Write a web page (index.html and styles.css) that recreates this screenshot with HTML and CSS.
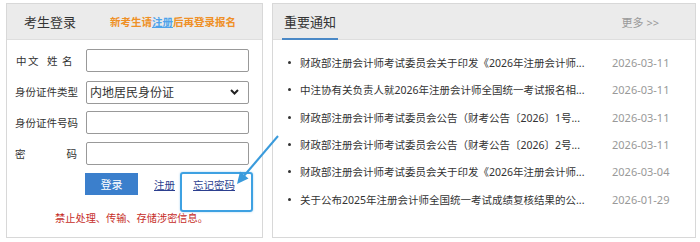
FILE: index.html
```html
<!DOCTYPE html>
<html lang="zh-CN">
<head>
    <meta charset="UTF-8">
    <meta name="viewport" content="width=device-width, initial-scale=1.0">
    <title>考生登录</title>
    <link rel="stylesheet" href="styles.css">
</head>
<body>
    <div class="page">
        <div class="panel login">
            <div class="panel-head">
                <span class="login-title">考生登录</span>
                <span class="login-tip">新考生请<a href="#">注册</a>后再登录报名</span>
            </div>
            <form class="login-form">
                <div class="row">
                    <label class="label name-label"><span>中文</span><span>姓名</span></label>
                    <input type="text" class="field">
                </div>
                <div class="row">
                    <label class="label">身份证件类型</label>
                    <span class="select-wrap">
                        <select class="field select">
                            <option>内地居民身份证</option>
                        </select>
                        <svg class="chevron" width="9" height="6" viewBox="0 0 9 6"><path d="M1 1 L4.5 4.5 L8 1" fill="none" stroke="#222" stroke-width="2"/></svg>
                    </span>
                </div>
                <div class="row">
                    <label class="label">身份证件号码</label>
                    <input type="text" class="field">
                </div>
                <div class="row">
                    <label class="label justify">密码</label>
                    <input type="password" class="field">
                </div>
                <div class="actions">
                    <button type="button" class="btn-login">登录</button>
                    <a href="#" class="link">注册</a>
                    <a href="#" class="link forgot">忘记密码</a>
                </div>
                <p class="warning">禁止处理、传输、存储涉密信息。</p>
            </form>
        </div>

        <div class="panel notice">
            <div class="panel-head">
                <span class="notice-title">重要通知</span>
                <a href="#" class="more">更多 &gt;&gt;</a>
            </div>
            <ul class="notice-list">
                <li><span class="dot"></span><a href="#" class="item-title">财政部注册会计师考试委员会关于印发《2026年注册会计师...</a><span class="date">2026-03-11</span></li>
                <li><span class="dot"></span><a href="#" class="item-title">中注协有关负责人就2026年注册会计师全国统一考试报名相...</a><span class="date">2026-03-11</span></li>
                <li><span class="dot"></span><a href="#" class="item-title">财政部注册会计师考试委员会公告（财考公告〔2026〕1号...</a><span class="date">2026-03-11</span></li>
                <li><span class="dot"></span><a href="#" class="item-title">财政部注册会计师考试委员会公告（财考公告〔2026〕2号...</a><span class="date">2026-03-11</span></li>
                <li><span class="dot"></span><a href="#" class="item-title">财政部注册会计师考试委员会关于印发《2026年注册会计师...</a><span class="date">2026-03-04</span></li>
                <li><span class="dot"></span><a href="#" class="item-title">关于公布2025年注册会计师全国统一考试成绩复核结果的公...</a><span class="date">2026-01-29</span></li>
            </ul>
        </div>
    </div>

    <!-- annotation: highlight + arrow -->
    <div class="highlight"></div>
    <svg class="arrow" width="60" height="60" viewBox="230 130 60 60">
        <line x1="278" y1="136" x2="243" y2="177" stroke="#3a9bdc" stroke-width="2"/>
        <polygon points="237,184 248.5,178.5 240,171.5" fill="#3a9bdc"/>
    </svg>
</body>
</html>
```

FILE: styles.css
```css
body {
    margin: 0;
    background-color: #fff;
    font-family: "Noto Sans", "Noto Sans CJK SC", sans-serif;
    color: #333;
}

a {
    text-decoration: none;
}

.page {
    display: flex;
    gap: 9px;
    padding: 3px 0 0 6px;
}

.panel {
    height: 235px;
    box-sizing: border-box;
    border: 1px solid #d8d8d8;
    background-color: #fff;
}

.login {
    width: 257px;
}

.notice {
    width: 424px;
}

.panel-head {
    height: 36px;
    box-sizing: border-box;
    background-color: #ebebeb;
    border-bottom: 1px solid #dedede;
    display: flex;
    align-items: center;
}

/* login panel */
.login .panel-head {
    padding-left: 17px;
}

.login-title {
    font-size: 13px;
    width: 86px;
}

.login-tip {
    font-size: 10.5px;
    color: #ef9026;
    font-weight: bold;
}

.login-tip a {
    color: #4ea2ea;
    text-decoration: underline;
}

.login-form {
    margin: 0;
    padding: 9px 0 0 8px;
}

.row {
    display: flex;
    align-items: center;
    height: 23px;
    margin-bottom: 8px;
}

.label {
    width: 62px;
    font-size: 10.5px;
    color: #333;
    white-space: nowrap;
}

.label.justify {
    text-align: justify;
    text-align-last: justify;
}

.name-label {
    display: flex;
    padding-left: 1px;
    box-sizing: border-box;
}

.name-label span:first-child {
    letter-spacing: 1.5px;
    width: 37px;
}

.name-label span:last-child {
    letter-spacing: 4.5px;
}

.field {
    margin: 0 0 0 9px;
    width: 163px;
    height: 23px;
    box-sizing: border-box;
    border: 1px solid #999;
    border-radius: 2px;
    background-color: #fff;
    font-family: inherit;
}

.select-wrap {
    position: relative;
    display: block;
    width: 172px;
}

.select {
    appearance: none;
    -webkit-appearance: none;
    padding: 0 0 0 3px;
    font-size: 12px;
    color: #333;
}

.chevron {
    position: absolute;
    right: 10px;
    top: 9px;
}

.actions {
    display: flex;
    align-items: center;
    padding-left: 70px;
    margin-top: 4px;
    height: 22px;
}

.btn-login {
    width: 53px;
    height: 22px;
    border: none;
    background-color: #3b7fcc;
    color: #fff;
    font-size: 11px;
    font-family: inherit;
    padding: 0;
}

.link {
    font-size: 10.5px;
    color: #2c3f8f;
    text-decoration: underline;
    margin-left: 16px;
}

.link.forgot {
    margin-left: 18px;
}

.warning {
    margin: 15px 0 0 -8px;
    padding-right: 6px;
    text-align: center;
    font-size: 10.2px;
    color: #c62d28;
}

/* notice panel */
.notice .panel-head {
    align-items: stretch;
    padding-left: 9px;
}

.notice-title {
    display: flex;
    align-items: center;
    padding: 0 2px;
    font-size: 13px;
    color: #333;
    border-bottom: 2px solid #4a88c6;
    margin-bottom: -1px;
}

.more {
    margin-left: auto;
    padding-right: 36px;
    align-self: center;
    font-size: 11px;
    color: #999;
}

.notice-list {
    list-style: none;
    margin: 0;
    padding: 9px 0 0 15px;
}

.notice-list li {
    display: flex;
    align-items: center;
    height: 27.3px;
}

.dot {
    width: 3px;
    height: 3px;
    border-radius: 50%;
    background-color: #333;
    margin-right: 9px;
}

.item-title {
    flex: 0 0 300px;
    margin-right: 12px;
    font-size: 10.5px;
    color: #333;
    white-space: nowrap;
}

.date {
    font-size: 11px;
    color: #999;
}

/* annotation overlay */
.highlight {
    position: absolute;
    left: 180px;
    top: 172px;
    width: 73px;
    height: 40px;
    box-sizing: border-box;
    border: 2px solid #3ea1e2;
    border-radius: 3px;
    box-shadow: 0 0 2px rgba(62, 161, 226, 0.5);
}

.arrow {
    position: absolute;
    left: 230px;
    top: 130px;
}
```
